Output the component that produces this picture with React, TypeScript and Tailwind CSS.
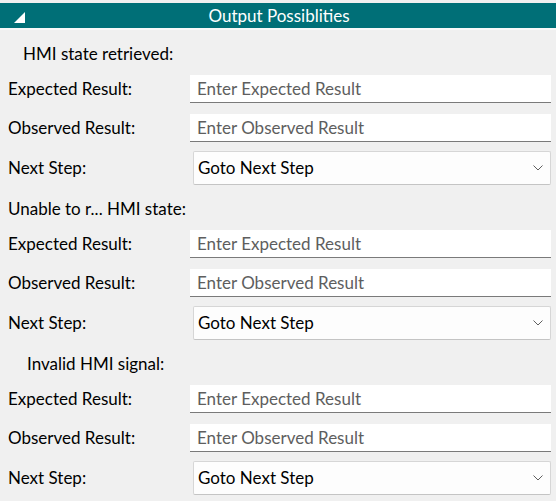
import React from "react";

type Section = { title: string; indent: string };

const sections: Section[] = [
  { title: "HMI state retrieved:", indent: "pl-[23px]" },
  { title: "Unable to r... HMI state:", indent: "pl-[8px]" },
  { title: "Invalid HMI signal:", indent: "pl-[27px]" },
];

function TextField({ placeholder }: { placeholder: string }) {
  return (
    <input
      className="h-[28px] w-full border-b border-[#7a7a7a] bg-white px-[7px] text-[17px] text-black outline-none placeholder:text-[#5e5e5e]"
      placeholder={placeholder}
    />
  );
}

function StepSelect() {
  return (
    <div className="ml-[3px] flex h-[34px] items-center justify-between rounded-[2px] border border-[#d6d6d6] border-b-[#c4c4c4] bg-[#fdfdfd] pl-[4px] pr-[7px]">
      <span className="text-[17px] text-black">Goto Next Step</span>
      <svg width="10" height="6" viewBox="0 0 10 6" fill="none">
        <path d="M0.5 0.5 L5 5 L9.5 0.5" stroke="#5f5f5f" strokeWidth="1" />
      </svg>
    </div>
  );
}

function Row({ label, children }: { label: string; children: React.ReactNode }) {
  return (
    <div className="grid grid-cols-[190px_1fr] items-center">
      <span className="pl-[8px] text-[17px] text-black">{label}</span>
      {children}
    </div>
  );
}

export default function App() {
  return (
    <div
      className="h-[501px] w-[556px] overflow-hidden bg-[#f0f0f0] pt-[3px]"
      style={{ fontFamily: "Lato, 'Noto Sans', sans-serif" }}
    >
      <div className="relative flex h-[25px] items-center justify-center bg-[#006f77]">
        <span className="absolute left-[14px] top-[9px] text-white">
          <svg width="11" height="11" viewBox="0 0 11 11">
            <path d="M11 0 L11 11 L0 11 Z" fill="#ffffff" />
          </svg>
        </span>
        <span className="pl-[2px] text-[17px] text-white">Output Possiblities</span>
      </div>
      <div className="h-[2px] bg-[#f8f8f8]" />
      <div className="flex flex-col pr-[5px]">
        {sections.map((s) => (
          <div key={s.title} className="pt-[12px]">
            <div className={`h-[33px] ${s.indent} text-[17px] leading-[24px] text-black`}>{s.title}</div>
            <div className="flex flex-col gap-[11px]">
              <Row label="Expected Result:">
                <TextField placeholder="Enter Expected Result" />
              </Row>
              <Row label="Observed Result:">
                <TextField placeholder="Enter Observed Result" />
              </Row>
              <div className="-mt-[2px]">
                <Row label="Next Step:">
                  <StepSelect />
                </Row>
              </div>
            </div>
          </div>
        ))}
      </div>
    </div>
  );
}
